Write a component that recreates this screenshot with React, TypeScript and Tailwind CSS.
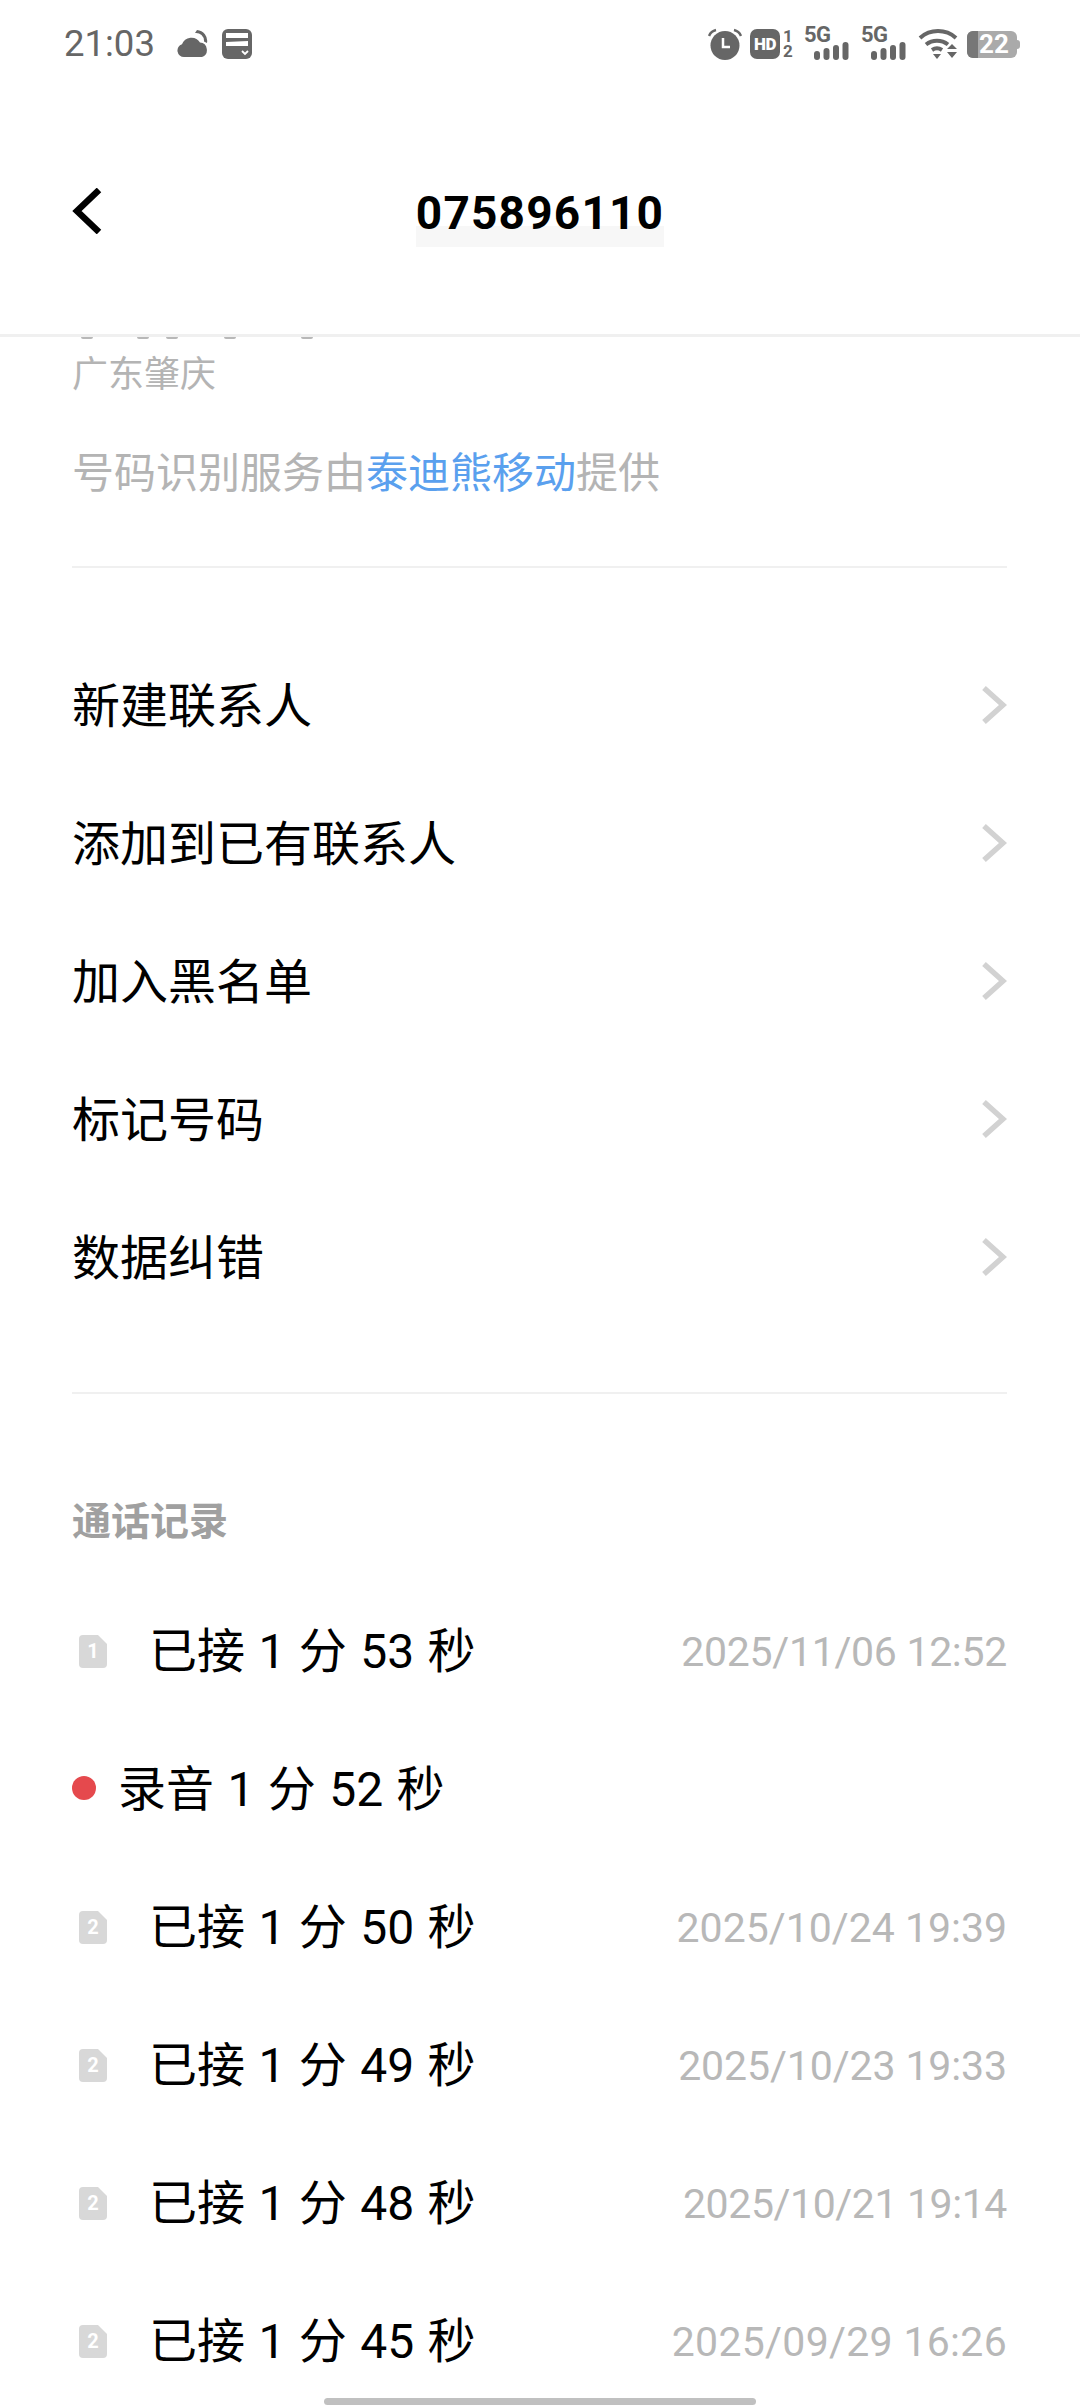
const cjk = "font-['Roboto','Noto_Sans_CJK_SC',sans-serif]";

const menuItems = ["新建联系人", "添加到已有联系人", "加入黑名单", "标记号码", "数据纠错"];

const calls = [
  { sim: "1", duration: "1 分 53 秒", date: "2025/11/06 12:52", fit: "tracking-[-0.3px]" },
  { duration: "1 分 52 秒" },
  { sim: "2", duration: "1 分 50 秒", date: "2025/10/24 19:39", fit: "tracking-normal" },
  { sim: "2", duration: "1 分 49 秒", date: "2025/10/23 19:33", fit: "tracking-[-0.1px]" },
  { sim: "2", duration: "1 分 48 秒", date: "2025/10/21 19:14", fit: "tracking-[-0.4px]" },
  { sim: "2", duration: "1 分 45 秒", date: "2025/09/29 16:26", fit: "tracking-[0.3px]" },
];

function Signal() {
  return (
    <div className="relative h-[30px] w-[45px]">
      <span className="absolute left-0 top-[-5px] text-[22px] leading-[22px] font-bold tracking-[-0.5px] text-[#666]">
        5G
      </span>
      <svg className="absolute left-[10px] top-[13px]" width="35" height="18" viewBox="0 0 35 18" fill="#666">
        <rect x="0" y="9" width="6" height="9" rx="3" />
        <rect x="9.5" y="6" width="6" height="12" rx="3" />
        <rect x="19" y="3" width="6" height="15" rx="3" />
        <rect x="28.5" y="0" width="6" height="18" rx="3" />
      </svg>
    </div>
  );
}

function StatusBar() {
  return (
    <div className="flex h-[88px] items-center justify-between pl-[64px] pr-[60px] text-[#666]">
      <div className="flex items-center">
        <span className="font-['Roboto',sans-serif] text-[36.500px] leading-none">21:03</span>
        <svg className="ml-[22px]" width="31" height="30" viewBox="0 0 31 30" fill="#666">
          <path d="M20 1a11 11 0 0 1 10 13l-3-1.500A8 8 0 0 0 18 4z" />
          <path d="M7 28a6.500 6.500 0 0 1-2-12.700A10 10 0 0 1 23 13.500 7.500 7.500 0 0 1 25 28z" />
        </svg>
        <svg className="ml-[14px]" width="30" height="30" viewBox="0 0 30 30">
          <rect width="30" height="30" rx="6" fill="#666" />
          <rect x="4" y="4" width="22" height="5" fill="#fff" />
          <path d="M4 13l22-1v5H4z" fill="#fff" />
          <path d="M20 22l3 3 3-3" fill="none" stroke="#fff" strokeWidth="1.800" />
        </svg>
      </div>
      <div className="flex items-center">
        <svg width="34" height="32" viewBox="0 0 34 32" fill="#666">
          <circle cx="17" cy="17.500" r="14.500" />
          <path d="M15 10v9h7" fill="none" stroke="#fff" strokeWidth="2.500" />
          <path d="M1 8a10 10 0 0 1 7-6" fill="none" stroke="#666" strokeWidth="2.500" />
          <path d="M33 8a10 10 0 0 0-7-6" fill="none" stroke="#666" strokeWidth="2.500" />
        </svg>
        <div className="ml-[8px] flex h-[30px] w-[30px] items-center justify-center rounded-[7px] bg-[#666] font-['Roboto',sans-serif] text-[17px] leading-none font-black tracking-[-0.5px] text-white">
          HD
        </div>
        <div className="ml-[2px] w-[12px] text-center font-['Roboto',sans-serif] text-[17px] leading-[15px] font-bold whitespace-pre-line text-[#666]">
          {"1\n2"}
        </div>
        <div className="ml-[10px]">
          <Signal />
        </div>
        <div className="ml-[12px]">
          <Signal />
        </div>
        <svg className="ml-[12px]" width="40" height="30" viewBox="0 0 40 30" fill="none" stroke="#666">
          <path d="M2 9a27 27 0 0 1 36 0" strokeWidth="4" />
          <path d="M8 15.500a18 18 0 0 1 22 0" strokeWidth="4" />
          <path d="M14 21a9 9 0 0 1 10 0" strokeWidth="4" />
          <path d="M15 25h8l-4 5z" fill="#666" stroke="none" />
          <path d="M29 20l5-5 5 5zM29 23h10l-5 6z" fill="#666" stroke="none" />
        </svg>
        <div className="relative ml-[9px] flex h-[27px] w-[50px] items-center overflow-hidden rounded-[6px] bg-[#aaa]">
          <div className="h-full w-[11px] bg-[#777]" />
          <span className="absolute left-[12px] font-['Roboto',sans-serif] text-[26px] leading-none font-bold text-white">
            22
          </span>
        </div>
        <div className="h-[9px] w-[3px] rounded-r-sm bg-[#aaa]" />
      </div>
    </div>
  );
}

function SimIcon({ n }: { n: string }) {
  return (
    <div className="relative flex h-[33px] w-[28px] items-center justify-center">
      <svg className="absolute inset-0" width="28" height="33" viewBox="0 0 28 33">
        <path d="M4 0h15l9 9v20a4 4 0 0 1-4 4H4a4 4 0 0 1-4-4V4a4 4 0 0 1 4-4z" fill="#d8d8d8" />
      </svg>
      <span className="relative font-['Roboto',sans-serif] text-[20px] leading-none font-bold text-white">{n}</span>
    </div>
  );
}

export default function App() {
  return (
    <div className={`relative h-[2408px] w-[1080px] overflow-hidden bg-white ${cjk}`}>
      <StatusBar />

      {/* Header */}
      <div className="grid h-[246px] grid-cols-[1fr_auto_1fr] items-center">
        <div className="pl-[72px]">
          <svg width="30" height="46" viewBox="0 0 30 46" fill="none" stroke="#000" strokeWidth="6.500">
            <path d="M27 2L5 23l22 21" />
          </svg>
        </div>
        <div className="relative pt-[4px] text-[46px] leading-none font-bold tracking-[1.200px] text-black">
          <div className="absolute left-0 right-0 top-[40px] h-[21px] bg-[#f7f7f7]" />
          <span className="relative">075896110</span>
        </div>
      </div>
      <div className="h-[3px] bg-[#f0f0f0]" />

      {/* Clipped row under the header */}
      <div className="flex h-[4px] overflow-hidden pl-[81px]">
        <span className="h-[2px] w-[12px] rounded-b-full bg-[#b8b8b8]" />
        <span className="ml-[44px] h-[2px] w-[12px] rounded-b-full bg-[#b8b8b8]" />
        <span className="ml-[17px] h-[2px] w-[12px] rounded-b-full bg-[#b8b8b8]" />
        <span className="ml-[46px] h-[2px] w-[12px] rounded-b-full bg-[#b8b8b8]" />
        <span className="ml-[65px] h-[2px] w-[12px] rounded-b-full bg-[#b8b8b8]" />
      </div>

      <div className="pl-[72px] pr-[73px]">
        <div className="mt-[10px] text-[36px] leading-[48px] text-[#b4b4b4]">广东肇庆</div>
        <div className="mt-[45px] text-[42px] leading-[60px] text-[#b4b4b4]">
          号码识别服务由<span className="text-[#5aa0ee]">泰迪熊移动</span>提供
        </div>
        <div className="mt-[62px] h-[2px] bg-[#f0f0f0]" />

        <div className="mt-[68px]">
          {menuItems.map((item) => (
            <div key={item} className="flex h-[138px] items-center justify-between">
              <span className="pt-[3px] text-[48px] leading-none text-black">{item}</span>
              <svg width="26" height="40" viewBox="0 0 26 40" fill="none" stroke="#d2d2d2" strokeWidth="5.500">
                <path d="M3 3l19 17L3 37" />
              </svg>
            </div>
          ))}
        </div>

        <div className="mt-[66px] h-[2px] bg-[#f0f0f0]" />
        <div className="mt-[103px] text-[39px] leading-[50px] font-bold text-[#a0a0a0]">通话记录</div>

        <div className="mt-[35px]">
          {calls.map((call) => (
            <div key={call.duration} className="flex h-[138px] items-center justify-between">
              <div className="flex items-center">
                {call.sim ? (
                  <div className="ml-[7px] mr-[45px]">
                    <SimIcon n={call.sim} />
                  </div>
                ) : (
                  <div className="mr-[25px] -mt-[2px] h-[24px] w-[24px] rounded-full bg-[#e5494d]" />
                )}
                <span className="-ml-[3px] pt-[2px] text-[48px] leading-none text-black [word-spacing:1.500px]">
                  {call.sim ? "已接" : "录音"} {call.duration}
                </span>
              </div>
              {call.date && (
                <span className={`pt-[2px] text-[41px] leading-none text-[#b8b8b8] ${call.fit}`}>{call.date}</span>
              )}
            </div>
          ))}
        </div>
      </div>

      {/* Home indicator */}
      <div className="absolute bottom-[3px] left-[324px] h-[7px] w-[432px] rounded-full bg-[#c0c0c0]" />
    </div>
  );
}
